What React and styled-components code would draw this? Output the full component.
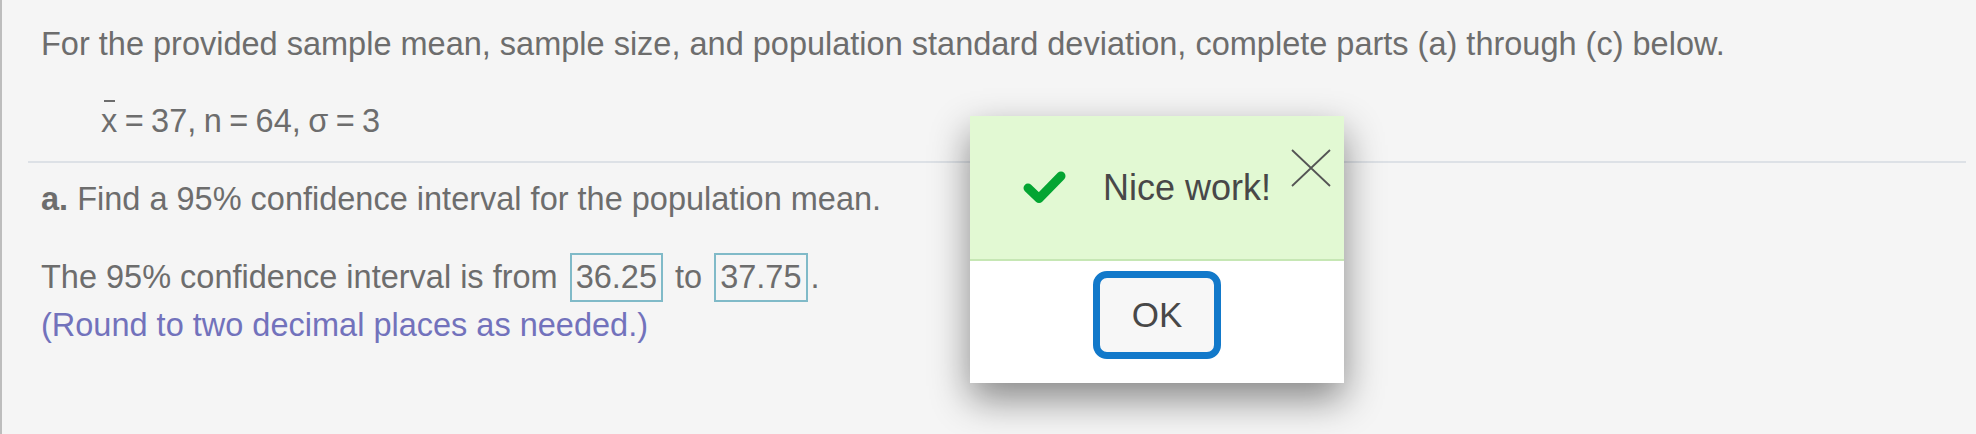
import React from "react";
import styled, { createGlobalStyle } from "styled-components";

const Global = createGlobalStyle`
  html, body { margin: 0; padding: 0; background: #f5f5f5; }
  * { box-sizing: border-box; }
`;

const Page = styled.div`
  position: relative;
  min-height: 434px;
  background: #f5f5f5;
  border-left: 2px solid #bdbdbd;
  padding-top: 24px;
  font-family: "Liberation Sans", Arial, sans-serif;
  font-size: 32.5px;
  color: #6d6d6d;
  overflow: hidden;
`;

const Section = styled.div`
  padding-left: 39px;
`;

const Line = styled.p`
  margin: ${(p) => p.$mt || 0}px 0 0 ${(p) => p.$indent || 0}px;
  line-height: 40px;
  white-space: nowrap;
  color: ${(p) => (p.$hint ? "#7272bc" : "inherit")};
`;

const Given = styled(Line)`
  word-spacing: -1.6px;
`;

const XBar = styled.span`
  position: relative;
  display: inline-block;
  &::before {
    content: "";
    position: absolute;
    left: 3px;
    top: -1px;
    width: 11px;
    height: 1.5px;
    background: #6d6d6d;
  }
`;

const Divider = styled.hr`
  border: 0;
  height: 2px;
  background: #dde1e6;
  margin: 20px 10px 0 26px;
`;

const Bold = styled.b`
  font-weight: bold;
`;

const AnswerBox = styled.span`
  display: inline-block;
  border: 2px solid #80bac8;
  padding: 0 4px;
  margin: 0 3px;
  line-height: 45px;
`;

const Modal = styled.div`
  position: absolute;
  left: 968px;
  top: 116px;
  width: 374px;
  height: 267px;
  background: #ffffff;
  box-shadow: 0 16px 36px rgba(0, 0, 0, 0.45);
  display: flex;
  flex-direction: column;
`;

const ModalHeader = styled.div`
  position: relative;
  height: 145px;
  background: #e2f9d3;
  border-bottom: 2px solid #c6e7b4;
  display: flex;
  align-items: center;
  padding-left: 52px;
  gap: 36px;
`;

const Message = styled.span`
  font-size: 36px;
  color: #484848;
`;

const CloseButton = styled.button`
  position: absolute;
  right: 13px;
  top: 33px;
  width: 40px;
  height: 38px;
  padding: 0;
  border: 0;
  background: transparent;
  display: flex;
`;

const ModalFooter = styled.div`
  flex: 1;
  display: flex;
  justify-content: center;
  align-items: flex-start;
  padding-top: 10px;
`;

const OkButton = styled.button`
  width: 128px;
  height: 88px;
  border: 7px solid #1279ca;
  border-radius: 14px;
  background: #f7f7f7;
  font-family: "Liberation Sans", Arial, sans-serif;
  font-size: 35px;
  color: #484848;
  padding: 0;
`;

export default function App() {
  return (
    <>
      <Global />
      <Page>
        <Section>
          <Line>
            For the provided sample mean, sample size, and population standard deviation, complete parts (a) through (c) below.
          </Line>
          <Given $mt={37} $indent={60}>
            <XBar>x</XBar> = 37, n = 64, σ = 3
          </Given>
        </Section>
        <Divider />
        <Section>
          <Line $mt={16}>
            <Bold>a.</Bold> Find a 95% confidence interval for the population mean.
          </Line>
          <Line $mt={34}>
            The 95% confidence interval is from <AnswerBox>36.25</AnswerBox> to{" "}
            <AnswerBox>37.75</AnswerBox>.
          </Line>
          <Line $mt={3} $hint>
            (Round to two decimal places as needed.)
          </Line>
        </Section>
        <Modal>
          <ModalHeader>
            <svg width="45" height="35" viewBox="0 0 45 35">
              <path
                d="M6 18 L17 28.5 L39 6"
                fill="none"
                stroke="#04a532"
                strokeWidth="9"
                strokeLinecap="round"
                strokeLinejoin="round"
              />
            </svg>
            <Message>Nice work!</Message>
            <CloseButton aria-label="Close">
              <svg width="40" height="38" viewBox="0 0 40 38">
                <path d="M1 1 L39 37 M39 1 L1 37" stroke="#555" strokeWidth="1.8" fill="none" />
              </svg>
            </CloseButton>
          </ModalHeader>
          <ModalFooter>
            <OkButton>OK</OkButton>
          </ModalFooter>
        </Modal>
      </Page>
    </>
  );
}
